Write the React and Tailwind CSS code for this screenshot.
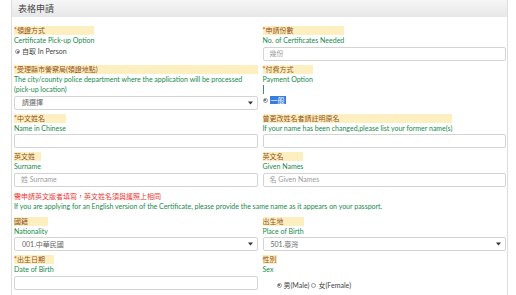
import React from 'react';

const FONT = '"Lato", "Noto Sans CJK TC", sans-serif';

function Radio({ checked }) {
  return (
    <span className="inline-flex items-center justify-center w-[5px] h-[5px] rounded-full border border-[#9a9a9a] bg-white mr-[2px]">
      {checked && <span className="w-[2px] h-[2px] rounded-full bg-[#555]" />}
    </span>
  );
}

function Label({ zh, en, required }) {
  return (
    <div className="w-fit max-w-full">
      <div className="h-[9px] leading-[9px] text-[7px] bg-[#fdefc0] text-[#93521a] whitespace-nowrap">
        {required && <span className="text-[#e53935]">*</span>}
        {zh}
      </div>
      <div className="leading-[10.5px] text-[7px] text-[#168a4b]">{en}</div>
    </div>
  );
}

function TextInput({ placeholder }) {
  return (
    <div className="mt-[1px] h-[14px] border border-[#d4d4d4] rounded-[2px] bg-white flex items-center px-[6px] text-[7px] leading-none text-[#9b9b9b]">
      {placeholder}
    </div>
  );
}

function Select({ value }) {
  return (
    <div className="mt-[1px] h-[14px] border border-[#d4d4d4] rounded-[2px] bg-white flex items-center justify-between pl-[7px] pr-[4px] text-[7px] leading-none text-[#666]">
      <span>{value}</span>
      <svg width="5" height="4" viewBox="0 0 5 4">
        <path d="M0 0.5 L5 0.5 L2.5 3.5 Z" fill="#333" />
      </svg>
    </div>
  );
}

function Field({ zh, en, required, children }) {
  return (
    <div className="flex flex-col leading-none">
      <Label zh={zh} en={en} required={required} />
      {children}
    </div>
  );
}

export default function App() {
  return (
    <div className="w-[516px] h-[295px] bg-white overflow-hidden leading-none" style={{ fontFamily: FONT }}>
      <div className="ml-[11px] w-[497px] h-full border-x border-[#dedede]">
        <div className="h-[17px] bg-gradient-to-b from-[#f6f6f6] to-[#e7e7e7] flex items-center pl-[6px] text-[9px] text-[#444]">
          表格申請
        </div>
        <div className="pl-[2px] pr-[1px] pt-[9px] grid grid-cols-2 gap-x-[5px] gap-y-[4px]">
          <Field zh="領證方式" en="Certificate Pick-up Option" required>
            <div className="mt-[2px] flex items-center h-[8px] text-[7px] text-[#444] pl-[1px]">
              <Radio checked />
              <span>自取 In Person</span>
            </div>
          </Field>
          <Field zh="申請份數" en="No. of Certificates Needed" required>
            <TextInput placeholder="幾份" />
          </Field>

          <Field zh="受理縣市警察局(領證地點)" en="The city/county police department where the application will be processed (pick-up location)" required>
            <Select value="請選擇" />
          </Field>
          <Field zh="付費方式" en="Payment Option" required>
            <div className="mt-[1px] w-[1.5px] h-[9px] bg-[#3b78e7]" />
            <div className="mt-[2px] flex items-center h-[8px] text-[7px]">
              <Radio checked />
              <span className="bg-[#3a7be0] text-white px-[1px] leading-[8px]">一般</span>
            </div>
          </Field>

          <Field zh="中文姓名" en="Name in Chinese" required>
            <TextInput placeholder="" />
          </Field>
          <Field zh="曾更改姓名者請註明原名" en="If your name has been changed,please list your former name(s)">
            <TextInput placeholder="" />
          </Field>

          <Field zh="英文姓" en="Surname">
            <TextInput placeholder="姓 Surname" />
          </Field>
          <Field zh="英文名" en="Given Names">
            <TextInput placeholder="名 Given Names" />
          </Field>

          <div className="col-span-2 pt-[1px] pb-[2px]">
            <div className="leading-[9px] text-[7px] text-[#e53935]">需申請英文版者填寫，英文姓名須與護照上相同</div>
            <div className="leading-[10px] text-[7px] text-[#168a4b]">
              If you are applying for an English version of the Certificate, please provide the same name as it appears on your passport.
            </div>
          </div>

          <Field zh="國籍" en="Nationality">
            <Select value="001.中華民國" />
          </Field>
          <Field zh="出生地" en="Place of Birth">
            <Select value="501.臺灣" />
          </Field>

          <Field zh="出生日期" en="Date of Birth" required>
            <TextInput placeholder="" />
          </Field>
          <Field zh="性別" en="Sex">
            <div className="mt-[6px] pl-[14px] flex items-center h-[9px] text-[7px] text-[#444]">
              <Radio checked />
              <span className="mr-[2px]">男(Male)</span>
              <Radio />
              <span>女(Female)</span>
            </div>
          </Field>
        </div>
      </div>
    </div>
  );
}
